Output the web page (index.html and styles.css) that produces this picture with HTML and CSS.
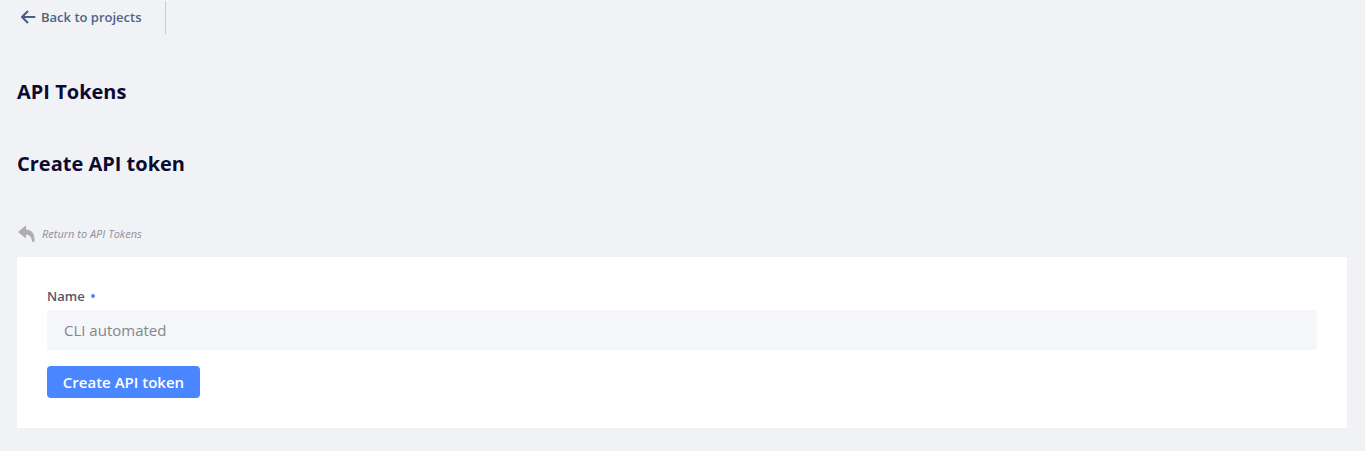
FILE: index.html
```html
<!DOCTYPE html>
<html lang="en">
<head>
<meta charset="utf-8">
<title>API Tokens</title>
<link rel="stylesheet" href="styles.css">
</head>
<body>
<header class="topbar">
  <a class="back" href="#">
    <svg class="back-icon" viewBox="0 0 16 14" width="16" height="14" aria-hidden="true"><path d="M14.300 7H1.500M7 1 1 7l6 6" fill="none" stroke="#4a5f80" stroke-width="2.100"/></svg>
    <span>Back to projects</span>
  </a>
</header>
<main class="page">
  <h1 class="title">API Tokens</h1>
  <h2 class="subtitle">Create API token</h2>
  <a class="return" href="#">
    <svg class="return-icon" viewBox="0 0 17 17" width="17" height="17" aria-hidden="true"><path d="M8 .3 0 7l8 6.500V9.800c3.200 0 5.300 1.400 6.100 6.900h2.300C17.300 9 14 4.600 8 4.400z" fill="#adadb3"/></svg>
    <span>Return to API Tokens</span>
  </a>
  <form class="card">
    <label class="label" for="name">Name<span class="dot"></span></label>
    <input class="input" id="name" type="text" placeholder="CLI automated">
    <button class="btn" type="button">Create API token</button>
  </form>
</main>
</body>
</html>
```

FILE: styles.css
```css
* { box-sizing: border-box; }
html, body { margin: 0; height: 100%; }
body {
  background: #f0f2f6;
  font-family: "Open Sans", sans-serif;
  color: #0c0a2e;
  overflow: hidden;
}
.topbar {
  display: flex;
  height: 35px;
  padding-top: 1px;
}
.back {
  display: flex;
  align-items: center;
  gap: 4px;
  width: 166px;
  height: 33px;
  padding: 0 0 2px 21px;
  border-right: 1px solid #c9cbd2;
  color: #4f6384;
  font-size: 13px;
  font-weight: 600;
  text-decoration: none;
}
.page { padding: 0 18px 0 17px; }
.title {
  margin: 43px 0 0;
  font-size: 20px;
  line-height: 27px;
  font-weight: 700;
}
.subtitle {
  margin: 45px 0 0;
  font-size: 20px;
  line-height: 27px;
  font-weight: 700;
}
.return {
  display: flex;
  align-items: center;
  gap: 7px;
  margin-top: 44px;
  padding-left: 1px;
  height: 24px;
  color: #8f9199;
  font-size: 11px;
  font-style: italic;
  text-decoration: none;
}
.card {
  display: flex;
  flex-direction: column;
  align-items: flex-start;
  margin-top: 12px;
  height: 171px;
  padding: 30px 30px 30px;
  background: #fff;
}
.label {
  display: flex;
  align-items: center;
  height: 17px;
  font-size: 13px;
  font-weight: 600;
  color: #555569;
}
.dot {
  width: 4px;
  height: 4px;
  margin-left: 6px;
  border-radius: 50%;
  background: #4a86ff;
}
.input {
  width: 100%;
  height: 40px;
  margin-top: 6px;
  padding: 0 17px;
  border: 0;
  border-radius: 2px;
  background: #f4f6fa;
  font: 400 15px "Open Sans", sans-serif;
}
.input::placeholder { color: #85858a; opacity: 1; }
.btn {
  width: 153px;
  height: 32px;
  margin-top: 16px;
  padding: 0;
  border: 0;
  border-radius: 4px;
  background: #4a86ff;
  color: #fff;
  font: 600 15px "Open Sans", sans-serif;
}
```
